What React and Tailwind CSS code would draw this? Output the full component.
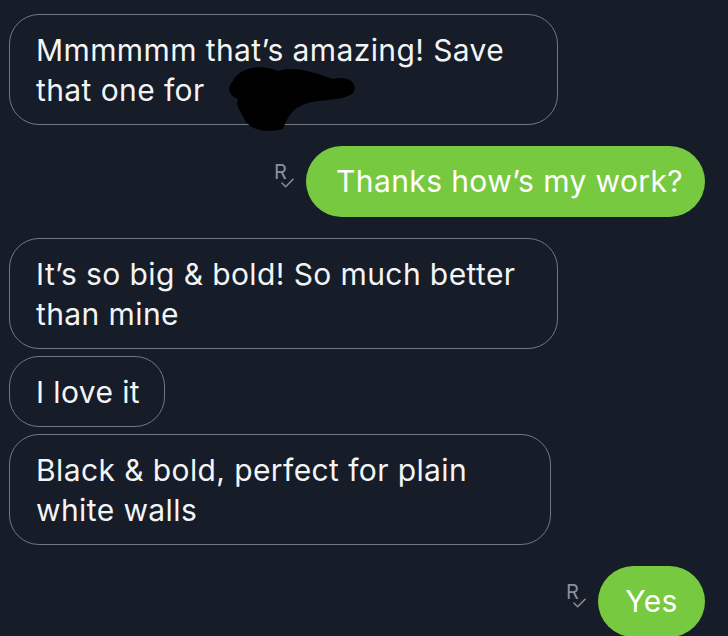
// Dark chat thread: outlined incoming bubbles on the left, green outgoing
// bubbles on the right with a small "R✓" read marker beside them.
function ReadMark() {
  return (
    <div className="relative w-[22px] h-[28px] shrink-0 text-[#8b919c] -mt-[8px]">
      <span className="absolute left-0 top-[-3px] text-[20px] leading-[22px] tracking-normal">R</span>
      <svg viewBox="0 0 14 10" className="absolute left-[7px] top-[14px] w-[13px] h-[10px]" fill="none">
        <path d="M1 5l4 4 8-8" stroke="currentColor" strokeWidth="1.6" strokeLinecap="round" strokeLinejoin="round" />
      </svg>
    </div>
  );
}

function Incoming({ children, className = "" }) {
  return (
    <div className={`relative self-start border border-[#717783] rounded-[30px] pl-[26px] pr-[24px] pt-[15px] pb-[14px] leading-[40px] ${className}`}>
      {children}
    </div>
  );
}

function Outgoing({ children, className = "" }) {
  return (
    <div className="flex justify-end items-center gap-[10px]">
      <ReadMark />
      <div className={`bg-[#77c93f] rounded-full h-[71px] flex items-center whitespace-nowrap text-white ${className}`}>
        {children}
      </div>
    </div>
  );
}

export default function App() {
  return (
    <div
      className="w-[728px] h-[636px] overflow-hidden bg-[#161c28] text-[#f3f4f6] text-[30px] tracking-[0.4px] flex flex-col pl-[9px] pr-[23px] pt-[14px]"
      style={{ fontFamily: "Inter, 'Noto Sans', sans-serif" }}
    >
      <Incoming className="w-[549px]">
        Mmmmmm that’s amazing! Save
        <br />
        that one for
        <svg viewBox="0 0 140 70" className="absolute left-[213px] top-[46px] w-[140px] h-[70px]">
          <path
            d="M10,20 C15,8 35,2 55,10 C70,4 95,12 110,18 C125,14 136,22 130,32 C120,40 100,38 85,42 C70,46 65,55 60,68 C45,72 30,70 22,60 C18,50 12,45 15,38 C5,34 4,26 10,20 Z"
            fill="#000"
          />
        </svg>
      </Incoming>

      <div className="mt-[21px]">
        <Outgoing className="w-[399px] pl-[30px]">Thanks how’s my work?</Outgoing>
      </div>

      <Incoming className="w-[549px] mt-[21px]">
        It’s so big &amp; bold! So much better
        <br />
        than mine
      </Incoming>

      <Incoming className="mt-[7px]">I love it</Incoming>

      <Incoming className="w-[542px] mt-[7px]">
        Black &amp; bold, perfect for plain
        <br />
        white walls
      </Incoming>

      <div className="mt-[21px]">
        <Outgoing className="w-[107px] justify-center">Yes</Outgoing>
      </div>
    </div>
  );
}
